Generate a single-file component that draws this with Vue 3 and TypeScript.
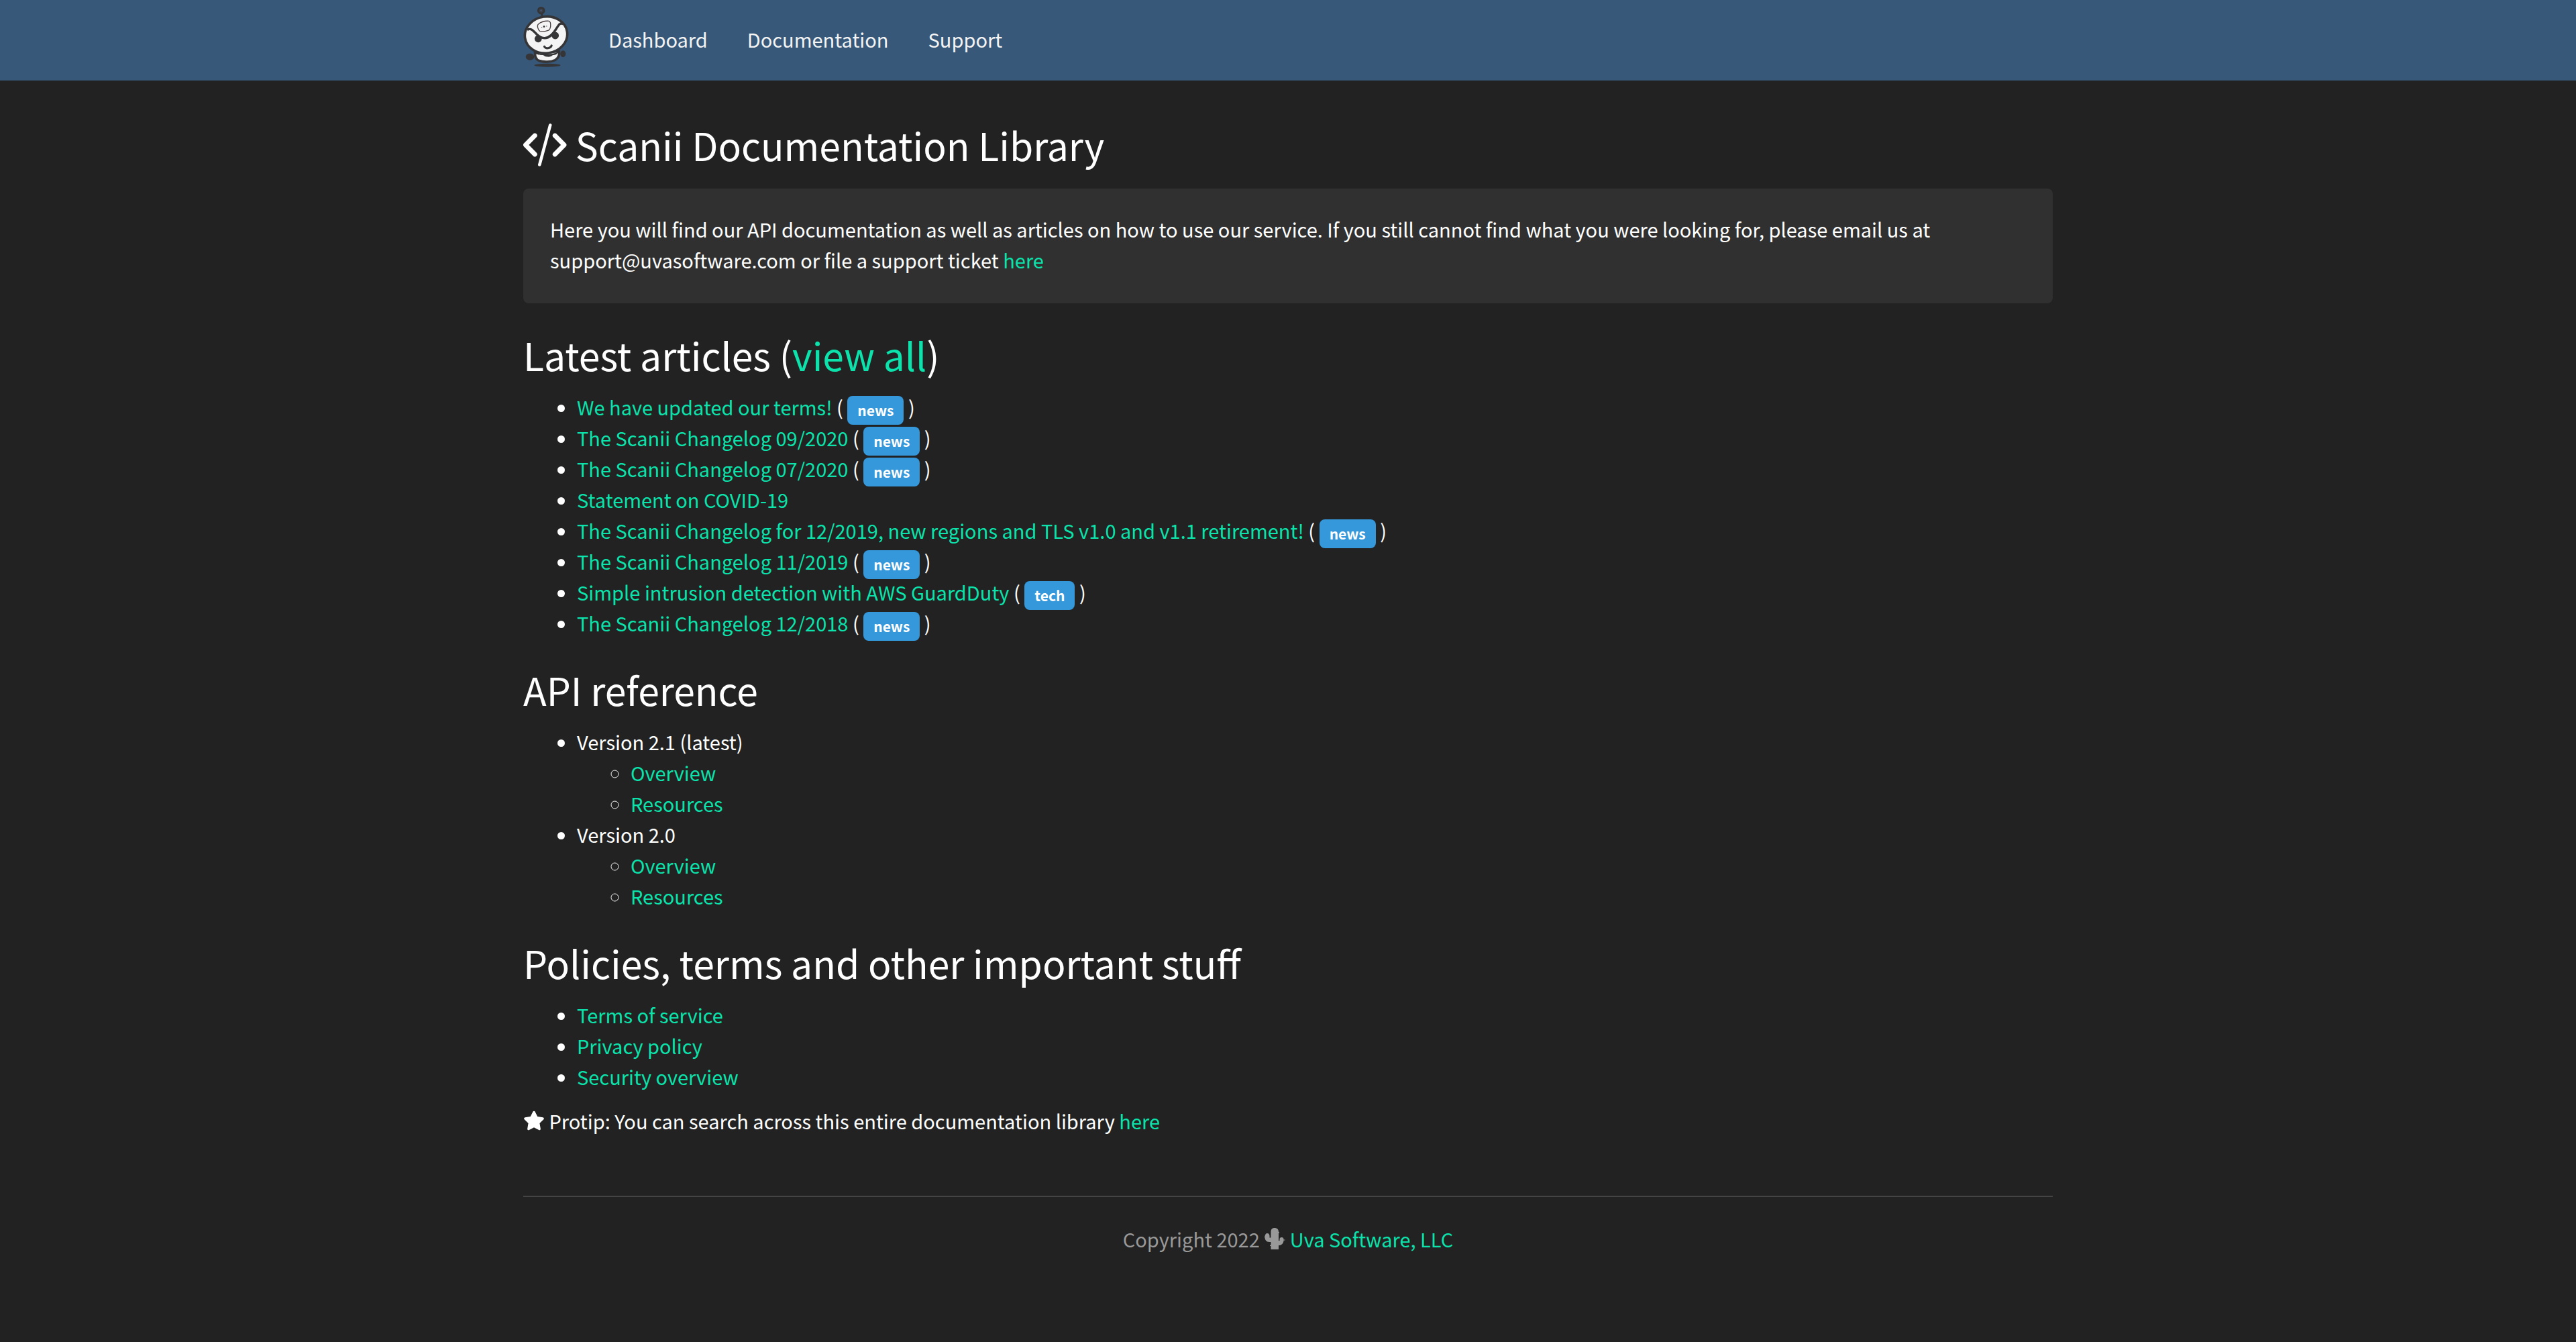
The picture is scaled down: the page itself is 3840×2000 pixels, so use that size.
<script setup lang="ts">
interface Article {
  title: string
  tag?: string
}

interface ApiVersion {
  label: string
  pages: string[]
}

const navItems: string[] = ['Dashboard', 'Documentation', 'Support']

const articles: Article[] = [
  { title: 'We have updated our terms!', tag: 'news' },
  { title: 'The Scanii Changelog 09/2020', tag: 'news' },
  { title: 'The Scanii Changelog 07/2020', tag: 'news' },
  { title: 'Statement on COVID-19' },
  { title: 'The Scanii Changelog for 12/2019, new regions and TLS v1.0 and v1.1 retirement!', tag: 'news' },
  { title: 'The Scanii Changelog 11/2019', tag: 'news' },
  { title: 'Simple intrusion detection with AWS GuardDuty', tag: 'tech' },
  { title: 'The Scanii Changelog 12/2018', tag: 'news' },
]

const versions: ApiVersion[] = [
  { label: 'Version 2.1 (latest)', pages: ['Overview', 'Resources'] },
  { label: 'Version 2.0', pages: ['Overview', 'Resources'] },
]

const policies: string[] = ['Terms of service', 'Privacy policy', 'Security overview']
</script>

<template>
  <div class="page">
    <header class="navbar">
      <nav class="container nav-row">
        <a href="#" class="brand" aria-label="Scanii">
          <svg class="logo" viewBox="0 0 68 92" aria-hidden="true">
            <ellipse cx="36" cy="88.300" rx="19.500" ry="2.500" fill="#353537" />
            <ellipse cx="10" cy="75.700" rx="6.300" ry="5" fill="#353537" />
            <ellipse cx="59.300" cy="71.300" rx="4" ry="5" fill="#353537" />
            <path d="M17.500 70c0 7 2 10 6 11.500 7 2.500 18 2 24-1 5-3 7-7 6-13z" fill="#f4f4f4" stroke="#353537" stroke-width="3.600" />
            <path d="M18 70c9 3 28 3 36-3-3 5-6 6-10 6-1 2-5 3-9 2.500-3 0-4-2-6-2.500-4 0-8 0-11-3z" fill="#353537" />
            <path d="M27.500 11l1 6" stroke="#353537" stroke-width="3" />
            <circle cx="26.700" cy="6.700" r="4.200" fill="#46536a" stroke="#353537" stroke-width="3.200" />
            <circle cx="26.700" cy="6.700" r="2" fill="#46536a" stroke="#353537" stroke-width="0.800" />
            <ellipse cx="34" cy="43" rx="31.700" ry="27.200" transform="rotate(-8 34 43)" fill="#f4f4f4" stroke="#353537" stroke-width="3.600" />
            <circle cx="22.300" cy="48.800" r="5.400" fill="#353537" />
            <circle cx="47.700" cy="44" r="5.400" fill="#353537" />
            <path
              d="M6 35.500c5-3 8 0 14 6.500 4 4 7 5.700 12 5.700 7 0 12-5 18-15 3-5 5-8.500 10-5.700"
              fill="none"
              stroke="#353537"
              stroke-width="3.400"
            />
            <path d="M31.500 60.500c2 3.500 9 3 10.700-1.500" fill="none" stroke="#353537" stroke-width="3.200" stroke-linecap="round" />
            <path
              d="M22.500 27c4-3.500 10-5 15.500-4.700 2.500.5 3 4.500 2.700 8-.5 3-1.500 5.700-3.700 6-4 1.500-8 2-12 1.400-3-1.700-5-8.700-2.500-10.700z"
              fill="#f4f4f4"
              stroke="#4a3f40"
              stroke-width="1.300"
            />
            <path d="M27 31.700h1.200M34.200 30h1.200" stroke="#777777" stroke-width="1.500" />
            <circle cx="31" cy="30.700" r="1.400" fill="#353537" />
          </svg>
        </a>
        <a v-for="item in navItems" :key="item" href="#" class="nav-link">{{ item }}</a>
      </nav>
    </header>

    <main class="container">
      <h1>
        <svg class="icon-code" viewBox="0 0 65 64" aria-hidden="true">
          <g fill="none" stroke="currentColor" stroke-linecap="round" stroke-linejoin="round">
            <path d="M17.300 18L3.500 32l13.800 14M47.200 18L61 32 47.200 46" stroke-width="6.800" />
            <path d="M40.200 2.500L24.300 61.500" stroke-width="4.600" />
          </g>
        </svg>
        Scanii Documentation Library
      </h1>

      <div class="intro">
        <p>
          Here you will find our API documentation as well as articles on how to use our service. If you still cannot
          find what you were looking for, please email us at support@uvasoftware.com or file a support ticket
          <a href="#">here</a>
        </p>
      </div>

      <section>
        <h2>Latest articles (<a href="#">view all</a>)</h2>
        <ul>
          <li v-for="article in articles" :key="article.title">
            <a href="#">{{ article.title }}</a>
            <template v-if="article.tag"> ( <span class="badge">{{ article.tag }}</span> )</template>
          </li>
        </ul>
      </section>

      <section>
        <h2>API reference</h2>
        <ul>
          <li v-for="version in versions" :key="version.label">
            {{ version.label }}
            <ul>
              <li v-for="page in version.pages" :key="page"><a href="#">{{ page }}</a></li>
            </ul>
          </li>
        </ul>
      </section>

      <section>
        <h2>Policies, terms and other important stuff</h2>
        <ul>
          <li v-for="policy in policies" :key="policy"><a href="#">{{ policy }}</a></li>
        </ul>
      </section>

      <p class="protip">
        <svg class="icon-small" viewBox="0 0 576 512" aria-hidden="true">
          <path
            d="M259.300 17.800L194 150.200 47.900 171.500c-26.200 3.800-36.700 36.100-17.700 54.600l105.700 103-25 145.500c-4.500 26.300 23.200 46 46.400 33.700L288 439.600l130.700 68.700c23.200 12.200 50.900-7.400 46.400-33.700l-25-145.500 105.700-103c19-18.500 8.500-50.800-17.700-54.600L382 150.200 316.700 17.800c-11.700-23.600-45.600-23.900-57.400 0z"
          />
        </svg>
        Protip: You can search across this entire documentation library <a href="#">here</a>
      </p>
    </main>

    <footer class="container">
      <div class="copyright">
        Copyright 2022
        <svg class="icon-small" viewBox="0 0 32 32" aria-hidden="true">
          <path
            d="M10.500 32v-5H9v-1.500h1.500V21H8c-4 0-6.500-3-6.500-7H.500v-1h1c0-3 1.500-5 3.500-5 2.500 0 3.500 2 3.500 4v2.500h2V6c0-4 2-6 5.500-6s6 2 6 6h1v1.500h-1V19h1.500v-2c0-2 1-3 3-3s3 1 3 3v.500h2v1h-2c0 4.500-3 7.500-7.500 7.500V32z"
          />
        </svg>{{ ' ' }}<a href="#">Uva Software, LLC</a>
      </div>
    </footer>
  </div>
</template>

<style>
html,
body {
  margin: 0;
  background: #222222;
}
</style>

<style scoped>
.page {
  min-height: 100vh;
  background: #222222;
  color: #ffffff;
  font-family: "Noto Sans CJK SC", "Noto Sans", sans-serif;
  font-size: 29px;
  line-height: 46px;
}

.container {
  box-sizing: border-box;
  width: 100%;
  max-width: 2340px;
  margin: 0 auto;
  padding: 0 30px;
}

a {
  color: #0ce3ac;
  text-decoration: none;
}

.navbar {
  background: #375879;
}

.nav-row {
  display: flex;
  align-items: center;
  gap: 59px;
  min-height: 120px;
}

.brand {
  display: flex;
  padding-bottom: 10px;
}

.logo {
  width: 68px;
  height: 92px;
}

.nav-link {
  padding-bottom: 4px;
  color: #f4f4f4;
}

h1,
h2 {
  margin: 0;
  font-size: 57px;
  font-weight: 400;
  line-height: 70px;
}

h1 {
  margin-top: 60px;
}

svg {
  fill: currentColor;
}

.icon-code {
  width: 65px;
  height: 64px;
  vertical-align: -8px;
}

.intro {
  margin-top: 31px;
  padding: 37px 40px 42px;
  border-radius: 8px;
  background: #303030;
}

p {
  margin: 0;
}

section {
  margin-top: 41px;
}

ul {
  margin: 0;
  padding-left: 80px;
}

h2 + ul {
  margin-top: 20px;
}

.badge {
  display: inline-block;
  padding: 0 15px;
  border-radius: 8px;
  background: #3498db;
  font-size: 21px;
  font-weight: 700;
  line-height: 43px;
  vertical-align: -1px;
  margin: -10px 0;
}

.protip {
  margin-top: 20px;
}

.icon-small {
  width: 32px;
  height: 32px;
  vertical-align: -3px;
}

.copyright {
  margin-top: 89px;
  padding: 39px 0 60px;
  border-top: 2px solid #444444;
  color: #999999;
  text-align: center;
}
</style>
